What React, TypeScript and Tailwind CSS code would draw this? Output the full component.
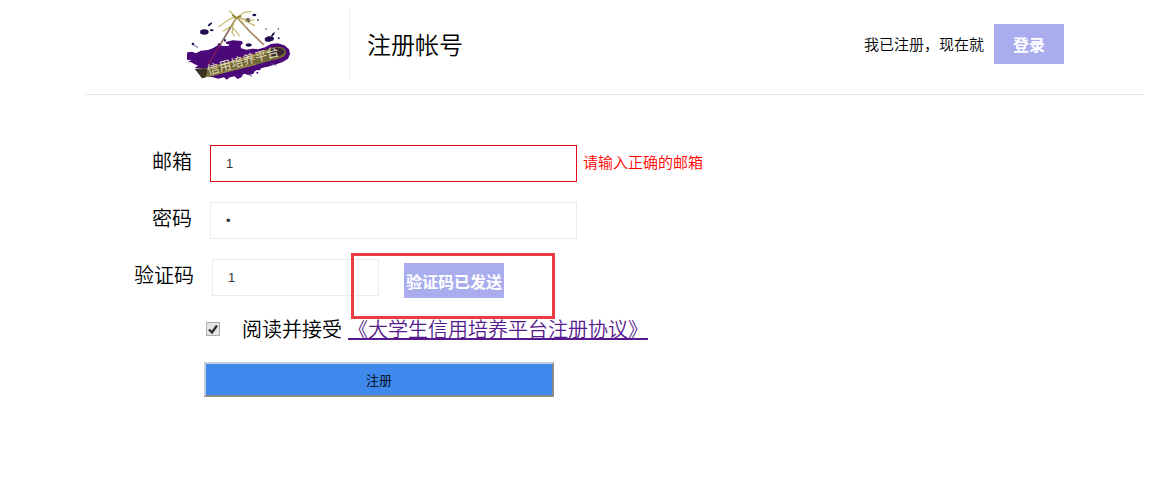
import { useState } from "react";

function Logo() {
  return (
    <svg width="104" height="76" viewBox="51 24 312 228" role="img" aria-label="信用培养平台">
      <g fill="#4b0878">
        <path d="M52 157l14-2 12 5 14-8 22-2 16-6 14-9 16 3 14 0 5-4-10-3-2-5 22-5 26 2 4 7-7 6 1 9 16 4 18-3 18 2 20-6 18-10 20-2 20 6 14 12 3 14-6 14-16 10-24 8-46 12-14 8-4 8-16 3-10-4-8 3-4 9-10 4-8-8-14 3-10 7-8-7-18 4-14-4-16-2-12-24-28-2 10-7-10-4-12-7-10 1 12-6-15-2z" />
        <ellipse cx="206" cy="224" rx="12" ry="8" />
        <ellipse cx="266" cy="206" rx="6" ry="5" />
        <ellipse cx="292" cy="197" rx="5" ry="3" />
        <circle cx="262" cy="218" r="3" />
        <circle cx="324" cy="180" r="2" />
      </g>
      <g fill="#1f0d4d">
        <ellipse cx="103" cy="96" rx="13" ry="8" />
        <ellipse cx="125" cy="91" rx="6" ry="3" />
        <ellipse cx="120" cy="73" rx="8" ry="3" transform="rotate(-40 120 73)" />
        <ellipse cx="233" cy="61" rx="8" ry="6" />
        <ellipse cx="253" cy="45" rx="6" ry="4" />
        <ellipse cx="264" cy="60" rx="3" ry="2" />
        <ellipse cx="298" cy="117" rx="14" ry="8" transform="rotate(-8 298 117)" />
        <ellipse cx="309" cy="103" rx="8" ry="3" transform="rotate(-50 309 103)" />
        <ellipse cx="236" cy="135" rx="9" ry="5" />
        <ellipse cx="165" cy="121" rx="3" ry="4" />
        <ellipse cx="148" cy="133" rx="5" ry="3" />
        <circle cx="288" cy="87" r="2" />
        <circle cx="325" cy="87" r="2" />
        <circle cx="326" cy="115" r="3" />
        <circle cx="69" cy="132" r="4" />
      </g>
      <path d="M70 134l14 9M304 191l16 5M236 224l10 5" stroke="#6d4c91" strokeWidth="3" fill="none" />
      <g fill="none" strokeLinecap="round">
        <path d="M197 57l-46 76" stroke="#8c6862" strokeWidth="5" />
        <path d="M151 133l-38 64" stroke="#7c1d5a" strokeWidth="4" />
        <path d="M202 54l40 43 38 36" stroke="#a58a6c" strokeWidth="5" />
        <path d="M179 33l20 20 24-16 20-2M198 52c-20 0-30 15-52 28M202 54c20-2 30 16 52 22M206 52c14 2 24 14 46 8M198 56c-14 12-8 30-12 44M190 75c-16 6-22 16-31 18M187 84c8 6 16 14 22 24M208 58c10 8 16 14 18 24M186 98l8 10" stroke="#c3b963" strokeWidth="3.5" />
        <path d="M188 46l12 8 12-6" stroke="#8a8130" strokeWidth="5" />
      </g>
      <path d="M75 207l38-4 64-18 92-29 34-13c20-6 40-2 45 10 3 15-13 22-36 27l-76 20-92 21-47 14z" fill="#716837" />
      <path d="M75 207l38-2-6 26-11 4z" fill="#3a3324" />
      <path d="M118 204l60-16 96-28 26-8" fill="none" stroke="#aba15d" strokeWidth="5" />
      <path d="M112 229l70-18 76-19" fill="none" stroke="#8f8548" strokeWidth="5" />
      <path d="M304 146c18-5 34-3 39 8 1 8-10 13-30 19l-12-12z" fill="#3a2a35" />
      <text
        x="115"
        y="224"
        transform="rotate(-15 115 224)"
        fontSize="37"
        fill="#e2dbbb"
        className="font-['Noto_Sans_CJK_SC',sans-serif] font-normal"
      >
        信用培养平台
      </text>
    </svg>
  );
}

export default function App() {
  const [form, setForm] = useState({ email: "1", password: "1", code: "1" });
  const [accepted, setAccepted] = useState(true);

  const handleChange = (field: string, value: string) => {
    setForm((f) => ({ ...f, [field]: value }));
  };

  const inputClass =
    "h-[37px] min-w-0 border bg-white px-[15px] font-['Liberation_Sans',sans-serif] text-[13px] text-[#333] outline-none";
  const labelClass = "shrink-0 pl-12 text-right text-xl leading-8";

  return (
    <div className="mr-[19px] ml-[85px] bg-white font-['Noto_Sans_CJK_SC',sans-serif] font-[350] text-black">
      <header className="flex h-[95px] items-start border-b border-[#e5e5e5] pt-2 pr-20">
        <div className="flex h-[72px] w-[265px] shrink-0 border-r border-[#ebebeb] pl-[102px]">
          <Logo />
        </div>
        <h1 className="pl-[17px] text-2xl leading-[72px] font-[350]">注册帐号</h1>
        <div className="mt-4 ml-auto flex items-center gap-[10px]">
          <span className="text-[15px]">我已注册，现在就</span>
          <a
            href="#login"
            className="h-10 w-[70px] bg-[#a9adee] text-center text-base leading-10 font-bold text-white"
          >
            登录
          </a>
        </div>
      </header>

      <form className="flex flex-col gap-5 pt-[50px]" onSubmit={(e) => e.preventDefault()}>
        <div className="flex items-start">
          <label htmlFor="email" className={`${labelClass} w-[107px]`}>邮箱</label>
          <input
            id="email"
            type="text"
            value={form.email}
            onChange={(e) => handleChange("email", e.target.value)}
            className={`${inputClass} ml-[18px] w-[367px] border-[#e00b1c]`}
          />
          <span className="ml-[6px] text-[15px] leading-[34px] text-[#f00]">请输入正确的邮箱</span>
        </div>

        <div className="flex items-start">
          <label htmlFor="password" className={`${labelClass} w-[107px]`}>密码</label>
          <input
            id="password"
            type="password"
            value={form.password}
            onChange={(e) => handleChange("password", e.target.value)}
            className={`${inputClass} ml-[18px] w-[367px] border-[#ebebeb]`}
          />
        </div>

        <div className="relative flex h-[37px] items-start">
          <label htmlFor="code" className={`${labelClass} w-[109px]`}>验证码</label>
          <input
            id="code"
            type="text"
            value={form.code}
            onChange={(e) => handleChange("code", e.target.value)}
            className={`${inputClass} ml-[18px] w-[167px] border-[#ebebeb]`}
          />
          <button
            type="button"
            className="mt-1 ml-[25px] h-[35px] w-[100px] bg-[#a9adee] text-base font-bold whitespace-nowrap text-white"
          >
            验证码已发送
          </button>
          <div className="pointer-events-none absolute -top-[6px] left-[266px] h-[66px] w-[204px] border-3 border-[#e83e43]" />
        </div>

        <div className="flex h-[26px] items-center pl-[121px] text-xl">
          <span className="grid shrink-0">
            <input
              id="accept"
              type="checkbox"
              checked={accepted}
              onChange={(e) => setAccepted(e.target.checked)}
              className="col-start-1 row-start-1 size-[14px] appearance-none border border-[#adadad] bg-[#e6e6e6]"
            />
            {accepted && (
              <svg viewBox="0 0 14 14" className="pointer-events-none col-start-1 row-start-1 size-[14px]">
                <path d="M3 7.5l3 3L11 3.5" fill="none" stroke="#333" strokeWidth="2.4" />
              </svg>
            )}
          </span>
          <label htmlFor="accept" className="ml-[22px] whitespace-nowrap">阅读并接受</label>
          <a href="#agreement" className="ml-[6px] whitespace-nowrap text-[#551a8b] underline">
            《大学生信用培养平台注册协议》
          </a>
        </div>

        <button
          type="submit"
          className="ml-[119px] h-[35px] w-[350px] border-2 border-t-[#c3cfdf] border-r-[#8b8b8b] border-b-[#8b8b8b] border-l-[#c3cfdf] bg-[#3f89ec] text-[13px]"
        >
          注册
        </button>
      </form>
    </div>
  );
}
